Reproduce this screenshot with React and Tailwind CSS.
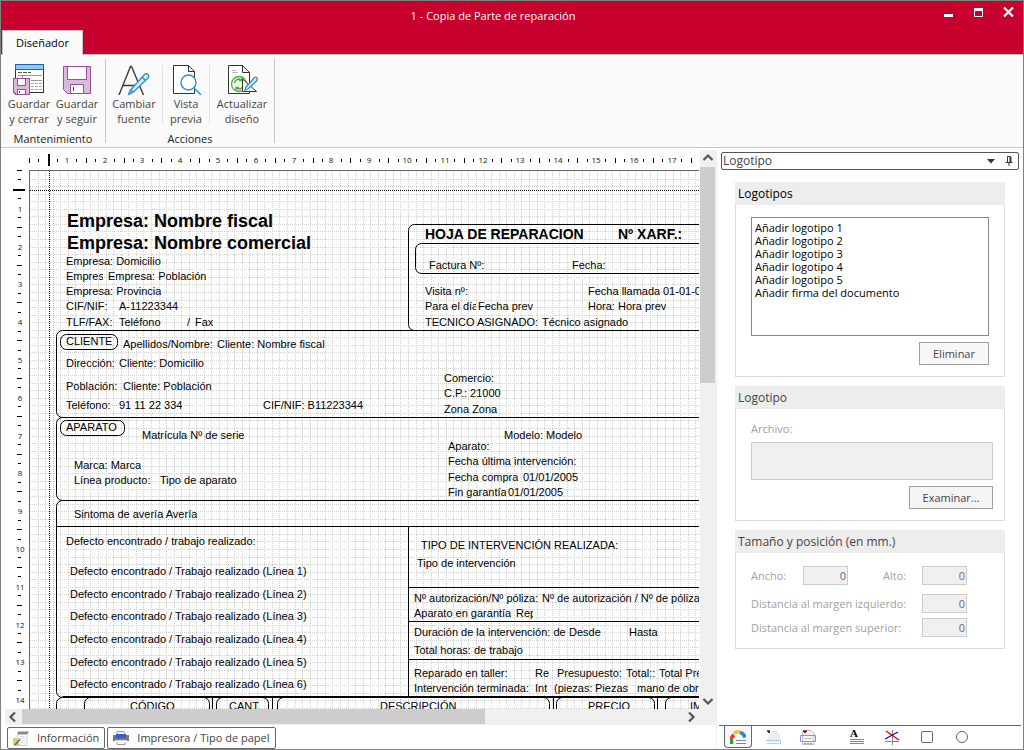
import { useState } from 'react';
import clsx from 'clsx';

const CM = 37.8;

// x, y are relative to the top left corner of the paper
const FIELDS = [
  { x: 37, y: 39, text: 'Empresa: Nombre fiscal', kind: 'title' },
  { x: 37, y: 61, text: 'Empresa: Nombre comercial', kind: 'title' },
  { x: 36, y: 83, text: 'Empresa: Domicilio' },
  { x: 36, y: 98, text: 'Empresa:', w: 37 },
  { x: 78, y: 98, text: 'Empresa: Población' },
  { x: 36, y: 113, text: 'Empresa: Provincia' },
  { x: 36, y: 128, text: 'CIF/NIF:' },
  { x: 89, y: 128, text: 'A-11223344' },
  { x: 36, y: 144, text: 'TLF/FAX:' },
  { x: 89, y: 144, text: 'Teléfono' },
  { x: 157, y: 144, text: '/' },
  { x: 165, y: 144, text: 'Fax' },

  { x: 395, y: 54, text: 'HOJA DE REPARACION', kind: 'heading' },
  { x: 588, y: 54, text: 'Nº XARF.:', kind: 'heading' },
  { x: 399, y: 87, text: 'Factura Nº:' },
  { x: 542, y: 87, text: 'Fecha:' },
  { x: 395, y: 113, text: 'Visita nº:' },
  { x: 558, y: 113, text: 'Fecha llamada' },
  { x: 633, y: 113, text: '01-01-05' },
  { x: 395, y: 128, text: 'Para el día', w: 51 },
  { x: 448, y: 128, text: 'Fecha prev' },
  { x: 558, y: 128, text: 'Hora:' },
  { x: 588, y: 128, text: 'Hora prev' },
  { x: 395, y: 144, text: 'TECNICO ASIGNADO:' },
  { x: 512, y: 144, text: 'Técnico asignado' },

  { x: 36, y: 163, text: 'CLIENTE' },
  { x: 93, y: 166, text: 'Apellidos/Nombre:', w: 91 },
  { x: 187, y: 166, text: 'Cliente: Nombre fiscal' },
  { x: 36, y: 185, text: 'Dirección:' },
  { x: 89, y: 185, text: 'Cliente: Domicilio' },
  { x: 36, y: 208, text: 'Población:' },
  { x: 93, y: 208, text: 'Cliente: Población' },
  { x: 36, y: 227, text: 'Teléfono:' },
  { x: 89, y: 227, text: '91 11 22 334' },
  { x: 233, y: 227, text: 'CIF/NIF: B11223344' },
  { x: 414, y: 200, text: 'Comercio:' },
  { x: 414, y: 215, text: 'C.P.: 21000' },
  { x: 414, y: 231, text: 'Zona Zona' },

  { x: 36, y: 249, text: 'APARATO' },
  { x: 112, y: 257, text: 'Matrícula Nº de serie' },
  { x: 44, y: 287, text: 'Marca: Marca' },
  { x: 44, y: 302, text: 'Línea producto:' },
  { x: 130, y: 302, text: 'Tipo de aparato' },
  { x: 474, y: 257, text: 'Modelo:' },
  { x: 516, y: 257, text: 'Modelo' },
  { x: 418, y: 268, text: 'Aparato:' },
  { x: 418, y: 283, text: 'Fecha última intervención:' },
  { x: 418, y: 299, text: 'Fecha compra' },
  { x: 493, y: 299, text: '01/01/2005' },
  { x: 418, y: 314, text: 'Fin garantía', w: 58 },
  { x: 478, y: 314, text: '01/01/2005' },

  { x: 44, y: 336, text: 'Sintoma de avería Avería' },
  { x: 36, y: 363, text: 'Defecto encontrado / trabajo realizado:' },
  { x: 40, y: 393, text: 'Defecto encontrado / Trabajo realizado (Línea 1)' },
  { x: 40, y: 416, text: 'Defecto encontrado / Trabajo realizado (Línea 2)' },
  { x: 40, y: 438, text: 'Defecto encontrado / Trabajo realizado (Línea 3)' },
  { x: 40, y: 461, text: 'Defecto encontrado / Trabajo realizado (Línea 4)' },
  { x: 40, y: 484, text: 'Defecto encontrado / Trabajo realizado (Línea 5)' },
  { x: 40, y: 506, text: 'Defecto encontrado / Trabajo realizado (Línea 6)' },

  { x: 391, y: 367, text: 'TIPO DE INTERVENCIÓN REALIZADA:' },
  { x: 387, y: 385, text: 'Tipo de intervención' },
  { x: 384, y: 420, text: 'Nº autorización/Nº póliza:', w: 126 },
  { x: 512, y: 420, text: 'Nº de autorización / Nº de póliza' },
  { x: 384, y: 435, text: 'Aparato en garantía' },
  { x: 486, y: 435, text: 'Rep', w: 17 },
  { x: 384, y: 454, text: 'Duración de la intervención: de' },
  { x: 539, y: 454, text: 'Desde' },
  { x: 599, y: 454, text: 'Hasta' },
  { x: 384, y: 472, text: 'Total horas: de trabajo' },
  { x: 384, y: 495, text: 'Reparado en taller:' },
  { x: 505, y: 495, text: 'Re' },
  { x: 527, y: 495, text: 'Presupuesto:' },
  { x: 596, y: 495, text: 'Total::' },
  { x: 629, y: 495, text: 'Total Presupuesto' },
  { x: 384, y: 510, text: 'Intervención terminada:' },
  { x: 505, y: 510, text: 'Int' },
  { x: 524, y: 510, text: '(piezas:' },
  { x: 565, y: 510, text: 'Piezas' },
  { x: 607, y: 510, text: 'mano de obra:' },

  { x: 100, y: 528, text: 'CÓDIGO' },
  { x: 199, y: 528, text: 'CANT.' },
  { x: 350, y: 528, text: 'DESCRIPCIÓN' },
  { x: 558, y: 528, text: 'PRECIO' },
  { x: 660, y: 528, text: 'IMPORTE' },
];

const FIELD_STYLES = {
  text: 'text-[11px] leading-[14px]',
  heading: 'text-[14px] leading-[18px] font-bold',
  title: 'text-[18px] leading-[22px] font-bold',
};

// x, y, width, height
const BOXES = [
  [378, 53, 376, 106],
  [385, 72, 360, 30],
  [26, 159, 728, 87],
  [30, 163, 57, 15],
  [26, 246, 728, 83],
  [30, 249, 64, 15],
  [26, 329, 728, 197],
  [26, 526, 728, 400],
  [54, 526, 125, 24],
  [186, 526, 52, 24],
  [247, 526, 272, 24],
  [526, 526, 98, 24],
  [635, 526, 110, 24],
];

// x1, y1, x2, y2
const LINES = [
  [26, 355, 754, 355],
  [378, 355, 378, 526],
  [378, 416, 754, 416],
  [378, 450, 754, 450],
  [378, 488, 754, 488],
  [32, 525, 748, 525],
  [182, 526, 182, 926],
  [242, 526, 242, 926],
  [523, 526, 523, 926],
  [627, 526, 627, 926],
];

const LOGOS = [
  'Añadir logotipo 1',
  'Añadir logotipo 2',
  'Añadir logotipo 3',
  'Añadir logotipo 4',
  'Añadir logotipo 5',
  'Añadir firma del documento',
];

const steps = (n) => Array.from({ length: n }, (_, i) => i);

const SaveCloseIcon = () => (
  <svg width="32" height="32" fill="none" shapeRendering="crispEdges">
    <path d="M2.500 1.500h28v28h-28z" fill="#fff" stroke="#333" />
    <rect x="2.500" y="1.500" width="28" height="5" fill="#92c8f0" stroke="#1268b3" />
    <path d="M5 9.500h4m1 0h4m1 0h3" stroke="#555" />
    <path d="M5 12.500h24M9.500 12v3M18 17.500h11" stroke="#999" />
    <path d="M18 20.500h3m1 0h3m1 0h3M18 23.500h3m1 0h3m1 0h3M18 26.500h3m1 0h3m1 0h3" stroke="#aaa" />
    <path d="M.5 15.500h16v16H3l-2.500-2.500z" fill="#dbb9db" stroke="#9a4d9c" />
    <rect x="4.500" y="15.500" width="8" height="7" fill="#fff" stroke="#9a4d9c" />
    <path d="M4.500 31.500v-5h8v5z" fill="#fff" stroke="#9a4d9c" />
    <path d="M6.500 28v2" stroke="#444" />
  </svg>
);

const SaveIcon = () => (
  <svg width="32" height="32" fill="none">
    <path d="M2.500 3.500h27v27H6.500l-4-4z" fill="#dbb9db" stroke="#9a4d9c" />
    <rect x="6.500" y="3.500" width="19" height="13" fill="#fff" stroke="#9a4d9c" />
    <path d="M9.500 30.500v-9h13v9z" fill="#fff" stroke="#9a4d9c" />
    <path d="M12.500 24v4" stroke="#444" />
  </svg>
);

const FontIcon = () => (
  <svg width="32" height="32" fill="none" strokeWidth="1.400">
    <path d="M1 32 12.500 3.500h1L25.500 32M5 22.500h15" stroke="#3a3a3a" />
    <path
      d="m12.500 27 14-15.500q2-1.500 3.500 0t0 3.500l-14.500 14-5 2.500zM12.500 27l3 2.500M24 14l3.500 3.500"
      fill="#d6eaf8"
      stroke="#2f8fd0"
    />
  </svg>
);

const PreviewIcon = () => (
  <svg width="32" height="32" fill="none">
    <path d="M3.500 2.500h15l6 6v22h-21z" fill="#fff" stroke="#333" />
    <path d="M18.500 2.500v6h6" stroke="#333" />
    <circle cx="18.500" cy="19.500" r="7.500" fill="#fff" stroke="#2f8fd0" strokeWidth="1.400" />
    <path d="m24 25 7 7" stroke="#2f8fd0" strokeWidth="1.500" />
  </svg>
);

const RefreshDesignIcon = () => (
  <svg width="32" height="32" fill="none">
    <path d="M2.500 2.500h14l7 7v21h-21z" fill="#fff" stroke="#333" />
    <path d="M16.500 2.500v7h7" stroke="#333" />
    <path d="M6 7.500h4M6 9.500h6" stroke="#bbb" />
    <circle cx="13" cy="21" r="7.500" fill="#f2faef" stroke="#4caf3c" strokeWidth="1.300" />
    <path
      d="M8.500 20q1-4 5-4l2.500 1m0-2.500v3h-3M17.500 22q-1 4-5 4L10 25m0 2.500v-3h3"
      stroke="#4caf3c"
      strokeWidth="1.300"
    />
    <path d="M16.500 16v12.500h14z" fill="#fff" stroke="#333" />
    <path d="m20 24 8.500-9.500q2-1 2.500.5t0 2.500l-9 8.500-3 1z" fill="#d6eaf8" stroke="#2f8fd0" strokeWidth="1.300" />
  </svg>
);

const RibbonButton = ({ icon, lines, className }) => (
  <button type="button" className={clsx('flex flex-col items-center text-[#444]', className)}>
    {icon}
    <span className="mt-px leading-[15px]">
      {lines[0]}
      <br />
      {lines[1]}
    </span>
  </button>
);

const RibbonGroup = ({ label, className, children }) => (
  <div className={clsx('flex flex-col border-r border-[#c6c6c6] pt-1', className)}>
    <div className="flex flex-1">{children}</div>
    <div className="text-center leading-2 text-[#222]">{label}</div>
  </div>
);

const RibbonDivider = () => <div className="mt-[2px] mb-[11px] w-px bg-[#e2e2e2]" />;

const TitleBar = () => (
  <header className="flex h-[53px] shrink-0 items-start bg-[#c8002d] text-white">
    <div role="tablist" className="mt-[29px] w-[82px] pl-px">
      <button
        type="button"
        role="tab"
        aria-selected="true"
        className="relative h-[25px] w-full border border-b-0 border-[#c6c6c6] bg-[#fafafa] text-black"
      >
        Diseñador
      </button>
    </div>
    <h1 className="mt-[6px] flex-1 pr-10 text-center leading-[18px]">1 - Copia de Parte de reparación</h1>
    <div className="mt-[5px] mr-[6px] flex gap-[16px]">
      <button type="button" aria-label="Minimizar" className="size-[14px]">
        <svg width="14" height="14">
          <rect x="1" y="8" width="9" height="3" fill="#fff" />
        </svg>
      </button>
      <button type="button" aria-label="Maximizar" className="size-[14px]">
        <svg width="14" height="14" fill="none">
          <path d="M1.500 2.500h8v8h-8z" stroke="#fff" />
          <path d="M1 2h9v3H1z" fill="#fff" />
        </svg>
      </button>
      <button type="button" aria-label="Cerrar" className="size-[14px]">
        <svg width="14" height="14" fill="none">
          <path d="m1 1.500 9 9m0-9-9 9" stroke="#fff" strokeWidth="2.200" />
        </svg>
      </button>
    </div>
  </header>
);

const Ribbon = () => (
  <div className="flex h-[94px] shrink-0 border-y border-[#c6c6c6] bg-[#fafafa] py-1">
    <RibbonGroup label="Mantenimiento" className="px-1">
      <RibbonButton className="w-12" icon={<SaveCloseIcon />} lines={['Guardar', 'y cerrar']} />
      <RibbonButton className="w-12" icon={<SaveIcon />} lines={['Guardar', 'y seguir']} />
    </RibbonGroup>
    <RibbonGroup label="Acciones">
      <RibbonButton className="w-14" icon={<FontIcon />} lines={['Cambiar', 'fuente']} />
      <RibbonDivider />
      <RibbonButton className="w-[46px]" icon={<PreviewIcon />} lines={['Vista', 'previa']} />
      <RibbonDivider />
      <RibbonButton className="w-16" icon={<RefreshDesignIcon />} lines={['Actualizar', 'diseño']} />
    </RibbonGroup>
  </div>
);

const HorizontalRuler = () => (
  <svg width="820" height="20" className="block shrink-0" shapeRendering="crispEdges">
    {steps(83).map((i) => {
      const x = Math.round(24 + (i * CM) / 4);
      if (i === 2) return <rect key={i} x={x} y="4" width="2" height="12" />;
      if (i > 0 && i % 4 === 0) {
        return (
          <text key={i} x={x} y="13" textAnchor="middle" fontSize="8" fill="#111">
            {i / 4}
          </text>
        );
      }
      const half = i % 2 === 0;
      return <rect key={i} x={x} y={half ? 8 : 9} width="1" height={half ? 5 : 3} />;
    })}
  </svg>
);

const VerticalRuler = () => (
  <svg width="24" height="1140" className="block shrink-0" shapeRendering="crispEdges">
    {steps(118).map((i) => {
      const y = Math.round((i * CM) / 4);
      if (i === 2) return <rect key={i} x="8" y={y} width="12" height="2" />;
      if (i > 0 && i % 4 === 0) {
        return (
          <text key={i} x="15" y={y + 4} textAnchor="middle" fontSize="8" fill="#111">
            {i / 4}
          </text>
        );
      }
      const half = i % 2 === 0;
      return <rect key={i} x={half ? 12 : 13} y={y} width={half ? 5 : 3} height="1" />;
    })}
  </svg>
);

const Paper = () => (
  <div className="relative h-[1123px] w-[794px] border-t border-l border-[#666] bg-white font-['Liberation_Sans',Arial,sans-serif] text-black">
    <svg width="794" height="1123" className="block" fill="none">
      <g stroke="#d2d2d2" strokeDasharray="1 1" shapeRendering="crispEdges">
        {steps(104).map((i) => {
          const x = Math.round((i + 1) * 7.56) + 0.5;
          return <path key={i} d={`M${x} 0V1123`} />;
        })}
        {steps(148).map((i) => {
          const y = Math.round((i + 1) * 7.56) + 0.5;
          return <path key={i} d={`M0 ${y}H794`} />;
        })}
      </g>
      <path d="M19.500 0V1123M0 19.500H794" stroke="#000" strokeDasharray="1 1" shapeRendering="crispEdges" />
      <g stroke="#000">
        {BOXES.map(([x, y, w, h]) => (
          <rect key={`${x}-${y}`} x={x + 0.5} y={y + 0.5} width={w} height={h} rx="6" />
        ))}
        {LINES.map(([x1, y1, x2, y2]) => (
          <path key={`${x1}-${y1}`} d={`M${x1 + 0.5} ${y1 + 0.5}L${x2 + 0.5} ${y2 + 0.5}`} />
        ))}
      </g>
    </svg>
    {FIELDS.map((f) => (
      <span
        key={`${f.x}-${f.y}`}
        className={clsx('absolute overflow-hidden whitespace-nowrap', FIELD_STYLES[f.kind || 'text'])}
        style={{ left: f.x, top: f.y, width: f.w }}
      >
        {f.text}
      </span>
    ))}
  </div>
);

const ARROWS = {
  up: 'm3.500 10 4.500-4.500 4.500 4.500',
  down: 'm3.500 6 4.500 4.500 4.500-4.500',
  left: 'm10 3.500-4.500 4.500 4.500 4.500',
  right: 'm5 3.500 4.500 4.500-4.500 4.500',
};

const ArrowButton = ({ dir, label }) => (
  <button type="button" aria-label={label} className="size-4 shrink-0">
    <svg width="16" height="16" fill="none">
      <path d={ARROWS[dir]} stroke="#555" strokeWidth="2.200" />
    </svg>
  </button>
);

const Designer = () => (
  <main className="flex min-w-0 flex-1 flex-col pl-1">
    <div className="flex min-h-0 flex-1">
      <div className="flex min-w-0 flex-1 flex-col overflow-hidden">
        <HorizontalRuler />
        <div className="flex min-h-0 flex-1 overflow-hidden">
          <VerticalRuler />
          <div className="min-w-0 flex-1 overflow-hidden">
            <Paper />
          </div>
        </div>
      </div>
      <div className="ml-px flex w-4 shrink-0 flex-col bg-[#f0f0f0]">
        <ArrowButton dir="up" label="Subir" />
        <div className="mt-px flex-1">
          <div className="h-[41%] w-[15px] bg-[#cdcdcd]" />
        </div>
        <ArrowButton dir="down" label="Bajar" />
      </div>
    </div>
    <div className="flex h-4 shrink-0 bg-[#f0f0f0] pr-4">
      <ArrowButton dir="left" label="Izquierda" />
      <div className="ml-px flex-1">
        <div className="h-[15px] w-[70%] bg-[#cdcdcd]" />
      </div>
      <ArrowButton dir="right" label="Derecha" />
    </div>
    <div className="flex h-6 shrink-0 items-end gap-[2px] pl-[2px] text-[#444]">
      <button type="button" className="flex h-[22px] items-center gap-2 rounded-xs border border-[#666] px-[5px]">
        <svg width="16" height="16" fill="none">
          <path d="M5 1.500h11l-2 3H4z" fill="#888" />
          <path d="M4.500 4v9m0 2.500H14V4" stroke="#ccc" />
          <path d="M7 6.500h5M7 8.500h5M7 10.500h5M7 12.500h5" stroke="#ddd" />
          <path d="M0 8h4v3l3 3v2H0z" fill="#f3c766" />
          <path d="m2 15 5-6" stroke="#2b6fb0" strokeWidth="1.500" />
        </svg>
        Información
      </button>
      <button type="button" className="flex h-[22px] items-center gap-2 rounded-xs border border-[#666] px-[5px]">
        <svg width="16" height="16" fill="none">
          <path d="M4 4V1.500h7l1 2.500M4 12v2.500h8V12" fill="#fff" stroke="#999" />
          <path d="M0 5h16v6H0z" fill="#777" />
          <path d="M3 4h10v4H3z" fill="#2f5fd0" />
          <path d="M2 10.500h12" stroke="#ddd" />
        </svg>
        Impresora / Tipo de papel
      </button>
    </div>
  </main>
);

const Group = ({ title, muted, children }) => (
  <section>
    <h2
      className={clsx(
        'h-[23px] bg-[#ededed] pl-[3px] text-[12px] leading-[23px]',
        muted ? 'text-[#444]' : 'text-black',
      )}
    >
      {title}
    </h2>
    <div className="border border-t-0 border-[#dcdcdc]">{children}</div>
  </section>
);

const NumberField = ({ id }) => (
  <input
    id={id}
    type="text"
    defaultValue="0"
    disabled
    className="h-[19px] w-[45px] border border-[#ccc] bg-[#f0f0f0] pr-px text-right leading-4 text-[#6d6d6d]"
  />
);

const PANEL_TABS = [
  {
    label: 'Logotipo',
    icon: (
      <>
        <path d="M1 14q-1-5 3-8" stroke="#e33" strokeWidth="3.500" />
        <path d="M1.500 15v-4" stroke="#2a3" strokeWidth="3.500" />
        <path d="M4 4.500q3-3 6-1" stroke="#f0c419" strokeWidth="3.500" />
        <path d="M10 3.500q4 1 5 5" stroke="#2f83d8" strokeWidth="3.500" />
        <path d="M6 11.500h10M6 14.500h10" stroke="#888" />
      </>
    ),
  },
  {
    label: 'Texto',
    icon: (
      <>
        <path d="M2 2h3" stroke="#c33" strokeWidth="2" />
        <path d="M3 3h2" stroke="#22c" strokeWidth="2" />
        <path d="M8 2.500h3l3 4V12H3V9" fill="#eee" stroke="#ccc" strokeDasharray="2 1" />
        <path d="M1 11.500h14.500v4" stroke="#a8cdec" />
        <path d="M2 14.500h12" stroke="#ccc" />
      </>
    ),
  },
  {
    label: 'Campo',
    icon: (
      <>
        <path d="M3 1.500h8l3 3v11H2.500V2" fill="#f4f4f4" stroke="#bbb" />
        <path d="M3 2h4" stroke="#c33" strokeWidth="2" />
        <path d="M4 3h2" stroke="#22c" strokeWidth="2" />
        <path d="M4 9.500h8" stroke="#bbb" />
        <path d="M.5 6.500h15v6H.5z" stroke="#8e8ef0" />
        <path d="M4 14.500h9" stroke="#8e8ef0" strokeDasharray="2 1" />
      </>
    ),
  },
  {
    label: 'Etiqueta',
    className: 'ml-[14px]',
    icon: (
      <>
        <text x="1" y="8" fontSize="11" fontWeight="bold" fill="#000" className="font-['Liberation_Serif',serif]">
          A
        </text>
        <path d="M1 10.500h14M1 12.500h14M1 14.500h14" stroke="#888" />
      </>
    ),
  },
  {
    label: 'Línea',
    icon: (
      <>
        <path d="M8.500 1v15M1 12.500h14" stroke="#888" />
        <path d="m2 2 13 9" stroke="#e00" strokeWidth="1.400" />
        <path d="m1 10 13-7" stroke="#11c" strokeWidth="1.400" />
      </>
    ),
  },
  { label: 'Rectángulo', icon: <rect x="2.500" y="2.500" width="11" height="11" rx="1.500" stroke="#666" /> },
  { label: 'Elipse', icon: <circle cx="8" cy="8" r="5.500" stroke="#666" /> },
];

const PropertiesPanel = () => {
  const [selected, setSelected] = useState('Logotipo');

  return (
    <aside className="flex w-[307px] shrink-0 flex-col border-l border-[#f0f0f0] text-[#444]">
      <div className="mx-1 mt-[2px] flex h-[18px] items-center rounded-xs border border-[#555] pr-[5px] pl-px">
        <span className="flex-1 text-[12px]">{selected}</span>
        <button type="button" aria-label="Cambiar panel" className="mr-[10px]">
          <svg width="8" height="5">
            <path d="M0 0h8L4 4.500z" fill="#333" />
          </svg>
        </button>
        <button type="button" aria-label="Anclar">
          <svg width="8" height="11" fill="none" stroke="#333">
            <path d="M2.500 6V.5h3V6M.5 6.500h7M4 7v3" />
            <path d="M5.500 1v5" strokeWidth="2" />
          </svg>
        </button>
      </div>

      <div className="mx-[18px] mt-3 flex flex-1 flex-col gap-[9px]">
        <Group title="Logotipos">
          <div className="flex flex-col items-end px-[15px] pt-3 pb-[11px]">
            <select
              size={6}
              aria-label="Logotipos"
              className="h-[119px] w-full overflow-hidden rounded-none border border-[#828790] bg-white px-px py-[2px] text-black"
            >
              {LOGOS.map((name) => (
                <option key={name} className="h-[13px] min-h-0 px-[2px] py-0 leading-[13px]">
                  {name}
                </option>
              ))}
            </select>
            <button type="button" className="mt-[6px] h-[23px] w-[70px] border border-[#a0a0a0] bg-[#f8f8f8]">
              Eliminar
            </button>
          </div>
        </Group>

        <Group title="Logotipo" muted>
          <div className="flex flex-col items-end pt-3 pr-[11px] pb-[11px] pl-[15px]">
            <label htmlFor="archivo" className="w-full leading-4 text-[#a0a0a0]">
              Archivo:
            </label>
            <textarea
              id="archivo"
              disabled
              className="mt-[5px] block h-[38px] w-full resize-none border border-[#ccc] bg-[#f0f0f0]"
            />
            <button type="button" className="mt-[6px] h-[23px] w-[84px] border border-[#a0a0a0] bg-[#f4f4f4]">
              Examinar...
            </button>
          </div>
        </Group>

        <Group title="Tamaño y posición (en mm.)" muted>
          <div className="flex flex-col pt-[13px] pr-[37px] pb-[11px] pl-[15px] text-[#a0a0a0]">
            <div className="mb-[9px] flex items-center">
              <label htmlFor="ancho" className="w-[52px]">
                Ancho:
              </label>
              <NumberField id="ancho" />
              <label htmlFor="alto" className="ml-[35px] flex-1">
                Alto:
              </label>
              <NumberField id="alto" />
            </div>
            <div className="mb-[5px] flex items-center justify-between">
              <label htmlFor="izquierdo">Distancia al margen izquierdo:</label>
              <NumberField id="izquierdo" />
            </div>
            <div className="flex items-center justify-between">
              <label htmlFor="superior">Distancia al margen superior:</label>
              <NumberField id="superior" />
            </div>
          </div>
        </Group>
      </div>

      <div role="tablist" className="mx-[2px] flex h-6 shrink-0 items-start gap-[7px] border-t border-[#666] pl-[5px]">
        {PANEL_TABS.map((tab) => (
          <button
            key={tab.label}
            type="button"
            role="tab"
            aria-label={tab.label}
            aria-selected={tab.label === selected}
            onClick={() => setSelected(tab.label)}
            className={clsx(
              'flex h-[22px] w-7 items-center justify-center rounded-b-sm border border-t-0',
              tab.label === selected ? 'border-[#666] bg-[#f8f8fc]' : 'border-transparent',
              tab.className,
            )}
          >
            <svg width="16" height="16" fill="none">
              {tab.icon}
            </svg>
          </button>
        ))}
      </div>
    </aside>
  );
};

export default function App() {
  return (
    <div className="flex h-screen flex-col border border-[#808080] bg-white font-['Open_Sans','Noto_Sans',sans-serif] text-[11px] leading-4">
      <TitleBar />
      <Ribbon />
      <div className="flex min-h-0 flex-1 pt-[2px]">
        <Designer />
        <PropertiesPanel />
      </div>
    </div>
  );
}
